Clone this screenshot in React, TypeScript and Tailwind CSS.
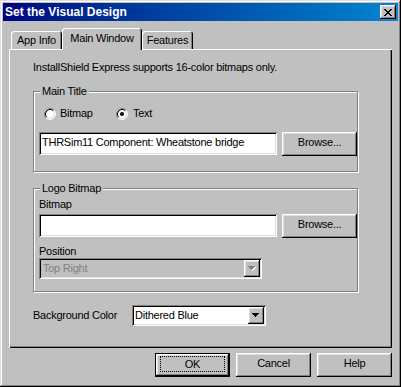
import type { ReactNode } from 'react'

const raised = 'shadow-[inset_-1px_-1px_#000,inset_1px_1px_#fff,inset_-2px_-2px_#808080,inset_2px_2px_#dfdfdf]'
const sunken = 'shadow-[inset_1px_1px_#808080,inset_-1px_-1px_#fff,inset_2px_2px_#000,inset_-2px_-2px_#dfdfdf]'

function CloseGlyph() {
  const rows = ['11000011', '01100110', '00111100', '00011000', '00111100', '01100110', '11000011']
  return (
    <svg width="8" height="7" viewBox="0 0 8 7" shapeRendering="crispEdges">
      {rows.map((r, y) =>
        r.split('').map((c, x) => (c === '1' ? <rect key={`${x}-${y}`} x={x} y={y} width="1" height="1" fill="#000" /> : null))
      )}
    </svg>
  )
}

function DownArrow({ disabled }: { disabled?: boolean }) {
  const color = disabled ? '#808080' : '#000'
  return (
    <div className={`w-[16px] h-[17px] flex items-center justify-center bg-[#c0c0c0] ${raised}`}>
      <svg width="8" height="5" viewBox="0 0 8 5" shapeRendering="crispEdges">
        {disabled && [0, 1, 2, 3].map(i => (
          <rect key={`s${i}`} x={i + 1} y={i + 1} width={7 - i * 2} height="1" fill="#fff" />
        ))}
        {[0, 1, 2, 3].map(i => (
          <rect key={i} x={i} y={i} width={7 - i * 2} height="1" fill={color} />
        ))}
      </svg>
    </div>
  )
}

function Radio({ checked }: { checked?: boolean }) {
  return (
    <svg width="12" height="12" viewBox="0 0 12 12">
      <circle cx="6" cy="6" r="5" fill="#fff" />
      <path d="M2.11 9.89 A5.5 5.5 0 0 1 9.89 2.11" stroke="#808080" fill="none" />
      <path d="M9.89 2.11 A5.5 5.5 0 0 1 2.11 9.89" stroke="#fff" fill="none" />
      <path d="M2.82 9.18 A4.5 4.5 0 0 1 9.18 2.82" stroke="#000" fill="none" />
      <path d="M9.18 2.82 A4.5 4.5 0 0 1 2.82 9.18" stroke="#dfdfdf" fill="none" />
      {checked && <circle cx="6" cy="6" r="2" fill="#000" />}
    </svg>
  )
}

function Button({ children, isDefault }: { children: ReactNode; isDefault?: boolean }) {
  if (isDefault) {
    return (
      <div className="w-[75px] h-[24px] border border-black">
        <div className={`w-full h-full flex items-center justify-center pb-[2px] ${raised}`}>
          <div className="w-[65px] h-[16px] border border-dotted border-black flex items-center justify-center">
            {children}
          </div>
        </div>
      </div>
    )
  }
  return (
    <div className={`w-[75px] h-[24px] flex items-center justify-center pb-[3px] ${raised}`}>{children}</div>
  )
}

function Group({ label, className, children }: { label: string; className?: string; children: ReactNode }) {
  return (
    <div className={`relative w-[325px] border border-[#808080] shadow-[1px_1px_#fff,inset_1px_1px_#fff] ${className ?? ''}`}>
      <span className="absolute left-[6px] -top-[7px] px-[2px] bg-[#c0c0c0]">{label}</span>
      {children}
    </div>
  )
}

function Tab({ label, selected, width }: { label: string; selected?: boolean; width: string }) {
  return (
    <div
      className={`${width} flex justify-center rounded-t-[3px] bg-[#c0c0c0] shadow-[inset_1px_1px_#fff,inset_-1px_0_#000,inset_-2px_0_#808080] ${
        selected ? 'h-[22px] -mb-[1px] pt-[4px] relative z-10' : 'h-[18px] pt-[3px]'
      }`}
    >
      {label}
    </div>
  )
}

export default function App() {
  return (
    <div className="w-[401px] h-[387px] bg-[#c0c0c0] p-[3px] flex flex-col text-black text-[11px] leading-[13px] tracking-[-0.25px] font-['Liberation_Sans',Arial,sans-serif] shadow-[inset_-1px_-1px_#000,inset_1px_1px_#dfdfdf,inset_-2px_-2px_#808080,inset_2px_2px_#fff]">
      <div className="h-[18px] flex items-center justify-between pl-[2px] pr-[2px] bg-linear-to-r from-[#000080] to-[#1084d0]">
        <span className="text-white font-bold text-[12px] tracking-normal">Set the Visual Design</span>
        <div className={`w-[16px] h-[14px] flex items-center justify-center bg-[#c0c0c0] ${raised}`}>
          <CloseGlyph />
        </div>
      </div>

      <div className="px-[6px] mt-[7px] flex flex-col">
        <div className="h-[21px] flex items-end pl-[2px]">
          <Tab label="App Info" width="w-[51px]" />
          <Tab label="Main Window" width="w-[80px]" selected />
          <Tab label="Features" width="w-[51px]" />
        </div>

        <div className="h-[299px] flex flex-col items-start shadow-[inset_1px_1px_#fff,inset_-1px_-1px_#000,inset_-2px_-2px_#808080]">
          <p className="mt-[12px] ml-[24px]">InstallShield Express supports 16-color bitmaps only.</p>

          <Group label="Main Title" className="mt-[17px] ml-[24px] h-[81px]">
            <div className="mt-[15px] ml-[10px] h-[13px] flex items-center">
              <div className="w-[72px] flex items-center gap-[4px]">
                <Radio />
                <span>Bitmap</span>
              </div>
              <div className="flex items-center gap-[5px]">
                <Radio checked />
                <span>Text</span>
              </div>
            </div>
            <div className="mt-[12px] ml-[5px] flex gap-[5px]">
              <div className={`w-[239px] h-[23px] bg-white pl-[3px] pt-[4px] ${sunken}`}>
                THRSim11 Component: Wheatstone bridge
              </div>
              <Button>Browse...</Button>
            </div>
          </Group>

          <Group label="Logo Bitmap" className="mt-[16px] ml-[24px] h-[104px]">
            <p className="mt-[9px] ml-[5px]">Bitmap</p>
            <div className="mt-[3px] ml-[5px] flex gap-[5px]">
              <div className={`w-[239px] h-[23px] bg-white ${sunken}`} />
              <Button>Browse...</Button>
            </div>
            <p className="mt-[7px] ml-[5px]">Position</p>
            <div className={`ml-[5px] w-[223px] h-[21px] flex items-center justify-between p-[2px] ${sunken}`}>
              <span className="pl-[2px] text-[#808080]">Top Right</span>
              <DownArrow disabled />
            </div>
          </Group>

          <div className="mt-[13px] ml-[24px] flex items-center">
            <span className="w-[99px]">Background Color</span>
            <div className={`w-[134px] h-[21px] bg-white flex items-center justify-between p-[2px] ${sunken}`}>
              <span className="pl-[1px]">Dithered Blue</span>
              <DownArrow />
            </div>
          </div>
        </div>

        <div className="mt-[5px] flex justify-end gap-[6px]">
          <Button isDefault>OK</Button>
          <Button>Cancel</Button>
          <Button>Help</Button>
        </div>
      </div>
    </div>
  )
}
